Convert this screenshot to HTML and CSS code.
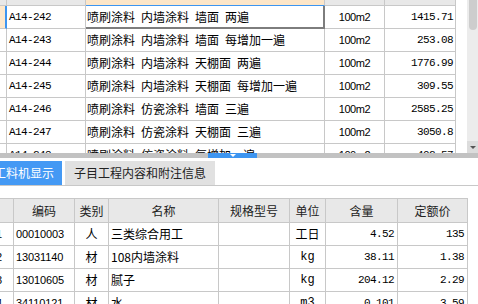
FILE: index.html
```html
<!DOCTYPE html>
<html lang="zh">
<head>
<meta charset="utf-8">
<link rel="stylesheet" href="styles.css">
</head>
<body>
<div class="top">
  <div class="grid">
    <div class="row head">
      <div class="ind"></div><div class="c">编码</div><div class="c selhead">名称</div><div class="c">单位</div><div class="c">单价</div>
    </div>
    <div class="row">
      <div class="ind cur"></div><div class="c code">A14-242</div><div class="c name focus">喷刷涂料 内墙涂料 墙面 两遍</div><div class="c unit">100m2</div><div class="c price">1415.71</div>
    </div>
    <div class="row">
      <div class="ind"></div><div class="c code">A14-243</div><div class="c name">喷刷涂料 内墙涂料 墙面 每增加一遍</div><div class="c unit">100m2</div><div class="c price">253.08</div>
    </div>
    <div class="row">
      <div class="ind"></div><div class="c code">A14-244</div><div class="c name">喷刷涂料 内墙涂料 天棚面 两遍</div><div class="c unit">100m2</div><div class="c price">1776.99</div>
    </div>
    <div class="row">
      <div class="ind"></div><div class="c code">A14-245</div><div class="c name">喷刷涂料 内墙涂料 天棚面 每增加一遍</div><div class="c unit">100m2</div><div class="c price">309.55</div>
    </div>
    <div class="row">
      <div class="ind"></div><div class="c code">A14-246</div><div class="c name">喷刷涂料 仿瓷涂料 墙面 三遍</div><div class="c unit">100m2</div><div class="c price">2585.25</div>
    </div>
    <div class="row">
      <div class="ind"></div><div class="c code">A14-247</div><div class="c name">喷刷涂料 仿瓷涂料 天棚面 三遍</div><div class="c unit">100m2</div><div class="c price">3050.8</div>
    </div>
    <div class="row">
      <div class="ind"></div><div class="c code">A14-248</div><div class="c name">喷刷涂料 仿瓷涂料 每增加一遍</div><div class="c unit">100m2</div><div class="c price">402.57</div>
    </div>
  </div>
  <div class="vscroll">
    <div class="thumb"></div>
    <div class="down"><span class="tri"></span></div>
  </div>
</div>
<div class="splitter"><div class="handle"><span class="htri"></span></div></div>
<div class="tabs">
  <div class="tab active">工料机显示</div>
  <div class="tab">子目工程内容和附注信息</div>
</div>
<div class="bottom">
  <div class="brow bhead">
    <div class="b num"></div><div class="b">编码</div><div class="b">类别</div><div class="b">名称</div><div class="b">规格型号</div><div class="b">单位</div><div class="b">含量</div><div class="b">定额价</div>
  </div>
  <div class="brow">
    <div class="b num">1</div><div class="b bcode">00010003</div><div class="b ctr">人</div><div class="b">三类综合用工</div><div class="b"></div><div class="b ctr">工日</div><div class="b val">4.52</div><div class="b val">135</div>
  </div>
  <div class="brow">
    <div class="b num">2</div><div class="b bcode">13031140</div><div class="b ctr">材</div><div class="b">108内墙涂料</div><div class="b"></div><div class="b ctr mono">kg</div><div class="b val">38.11</div><div class="b val">1.38</div>
  </div>
  <div class="brow">
    <div class="b num">3</div><div class="b bcode">13010605</div><div class="b ctr">材</div><div class="b">腻子</div><div class="b"></div><div class="b ctr mono">kg</div><div class="b val">204.12</div><div class="b val">2.29</div>
  </div>
  <div class="brow">
    <div class="b num">4</div><div class="b bcode">34110121</div><div class="b ctr">材</div><div class="b">水</div><div class="b"></div><div class="b ctr mono">m3</div><div class="b val">0.101</div><div class="b val">3.59</div>
  </div>
</div>
</body>
</html>
```

FILE: styles.css
```css
html, body {
  margin: 0;
  padding: 0;
  background: #fff;
  width: 478px;
  height: 304px;
  overflow: hidden;
}
body {
  font-family: "Noto Sans CJK SC", "Liberation Sans", sans-serif;
  font-size: 12px;
  color: #000;
}
.top {
  display: flex;
  height: 153px;
  overflow: hidden;
}
.grid {
  width: 467px;
  margin-top: -17px;
}
.row {
  display: grid;
  grid-template-columns: 7px 79px 239px 60px 71px;
  height: 23px;
}
.ind {
  border-right: 1px solid #c8c8c8;
  border-bottom: 1px solid #c8c8c8;
}
.ind.cur {
  background: #fde8cc;
  border-right: 2px solid #3d95f0;
}
.c {
  border-right: 1px solid #c8c8c8;
  border-bottom: 1px solid #c8c8c8;
  line-height: 22px;
  padding: 0 2px;
  white-space: nowrap;
  overflow: hidden;
}
.head .ind, .head .c {
  background: #e8e8e8;
  text-align: center;
  color: #222;
  line-height: 17px;
}
.head .selhead {
  background: #fde6c8;
  border-bottom: 1px solid #3d95f0;
}
.code {
  font-family: "Liberation Mono", monospace;
  font-size: 11px;
  letter-spacing: -0.6px;
}
.name {
  padding-left: 1px;
  word-spacing: 3.3px;
}
.focus {
  border-right: 2px solid #7d7d7d;
  border-bottom: 2px solid #7d7d7d;
  line-height: 21px;
}
.unit {
  text-align: center;
  font-family: "Liberation Sans", sans-serif;
  font-size: 11px;
  letter-spacing: -0.4px;
}
.price {
  text-align: right;
  font-family: "Liberation Mono", monospace;
  font-size: 11px;
  letter-spacing: -0.6px;
  padding-right: 2px;
}
.vscroll {
  width: 11px;
  background: #ececec;
  display: flex;
  flex-direction: column;
  justify-content: space-between;
}
.thumb {
  height: 30px;
  margin: 0 1px 0 2px;
  background: #cdcdcd;
  border-radius: 0 0 4px 4px;
}
.down {
  height: 12px;
  background: #dcdcdc;
  display: flex;
  align-items: center;
  justify-content: center;
}
.tri {
  width: 0;
  height: 0;
  border-left: 3px solid transparent;
  border-right: 3px solid transparent;
  border-top: 3px solid #555;
}
.splitter {
  height: 5px;
  background: #c2c2c2;
  display: flex;
}
.handle {
  margin-left: 208px;
  width: 49px;
  background: #3d95f0;
  display: flex;
  justify-content: center;
  align-items: center;
}
.htri {
  width: 0;
  height: 0;
  border-left: 3px solid transparent;
  border-right: 3px solid transparent;
  border-top: 3px solid #fff;
}
.tabs {
  display: flex;
  gap: 3px;
  padding-top: 3px;
  height: 24px;
  border-bottom: 1px solid #c8c8c8;
  margin-bottom: 12px;
}
.tab {
  height: 24px;
  line-height: 24px;
  padding: 0 9px;
  background: #e1e1e1;
  color: #222;
  white-space: nowrap;
}
.tab.active {
  margin-left: -14px;
  padding: 0 8px;
  background: #4499f4;
  color: #fff;
}
.bottom {
  width: 468px;
  border-top: 1px solid #c8c8c8;
  overflow: hidden;
}
.brow {
  display: grid;
  grid-template-columns: 29px 61px 34px 110px 71px 36px 72px 70px;
  margin-left: -15px;
  height: 23px;
}
.bhead {
  height: 24px;
}
.b {
  border-right: 1px solid #c8c8c8;
  border-bottom: 1px solid #c8c8c8;
  line-height: 22px;
  padding: 0 2px;
  white-space: nowrap;
  overflow: hidden;
}
.bhead .b {
  background: #e8e8e8;
  text-align: center;
  color: #222;
  line-height: 23px;
}
.num {
  text-align: center;
  font-family: "Liberation Sans", sans-serif;
  font-size: 11px;
}
.bcode {
  font-family: "Liberation Sans", sans-serif;
  font-size: 11px;
  letter-spacing: -0.1px;
}
.ctr {
  text-align: center;
}
.mono {
  font-family: "Liberation Mono", monospace;
  font-size: 12px;
}
.val {
  text-align: right;
  font-family: "Liberation Mono", monospace;
  font-size: 11px;
  letter-spacing: -0.6px;
  padding-right: 3px;
}
```
